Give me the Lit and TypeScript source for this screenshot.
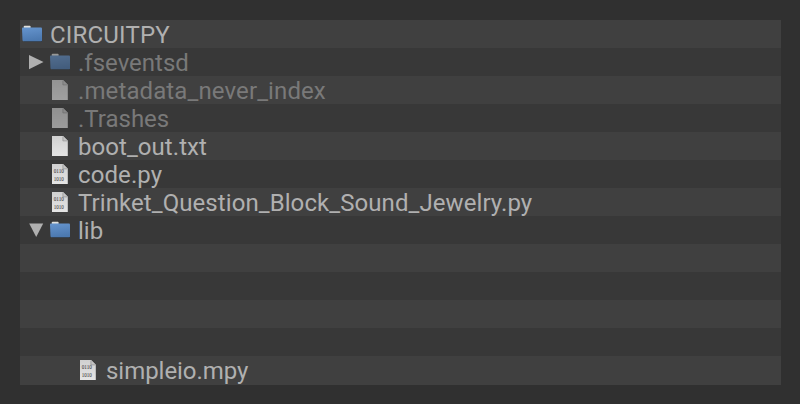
import { LitElement, html, css, svg, nothing } from "lit";
import { customElement } from "lit/decorators.js";
import { classMap } from "lit/directives/class-map.js";
import { styleMap } from "lit/directives/style-map.js";

type Kind = "folder" | "file" | "code";
interface Entry {
  name?: string;
  kind?: Kind;
  level?: number;
  open?: boolean;
  arrow?: boolean;
  dim?: boolean;
  tracking?: number;
}

const entries: Entry[] = [
  { name: "CIRCUITPY", kind: "folder", level: 0, tracking: 0.2 },
  { name: ".fseventsd", kind: "folder", level: 1, arrow: true, dim: true },
  { name: ".metadata_never_index", kind: "file", level: 1, dim: true, tracking: 0.11 },
  { name: ".Trashes", kind: "file", level: 1, dim: true },
  { name: "boot_out.txt", kind: "file", level: 1, tracking: 0.06 },
  { name: "code.py", kind: "code", level: 1, tracking: 0.1 },
  { name: "Trinket_Question_Block_Sound_Jewelry.py", kind: "code", level: 1, tracking: 0.08 },
  { name: "lib", kind: "folder", level: 1, arrow: true, open: true },
  {},
  {},
  {},
  {},
  { name: "simpleio.mpy", kind: "code", level: 2, tracking: -0.04 },
];

@customElement("app-root")
export class AppRoot extends LitElement {
  static styles = css`
    :host {
      display: block;
      box-sizing: border-box;
      height: 404px;
      padding: 20px 19px 19px 20px;
      background: #303030;
      font-family: Roboto, sans-serif;
      font-size: 24px;
      color: #b0b0b0;
    }
    .tree {
      display: flex;
      flex-direction: column;
      height: 365px;
    }
    .row {
      display: flex;
      align-items: flex-start;
      height: 28px;
      flex: none;
      background: #383838;
    }
    .row:nth-child(odd) {
      background: #404040;
    }
    .row:last-child {
      height: 29px;
    }
    .gap {
      width: 28px;
      height: 28px;
      flex: none;
    }
    .icon {
      width: 28px;
      height: 28px;
      flex: none;
      margin-right: 2px;
    }
    svg {
      display: block;
      width: 28px;
      height: 28px;
    }
    .name {
      line-height: 28px;
      height: 28px;
      white-space: pre;
      padding-top: 1px;
      box-sizing: border-box;
    }
    .dim .name {
      color: #797979;
    }
    .dim .icon {
      opacity: 0.58;
    }
    .bits {
      font: 5.4px "Liberation Serif", serif;
      fill: #222;
      opacity: 0.95;
    }
  `;

  private icon(kind: Kind) {
    if (kind === "folder") {
      return html`<svg viewBox="0 0 28 28">
        <defs>
          <linearGradient id="blue" x1="0" y1="0" x2="0.2" y2="1">
            <stop offset="0" stop-color="#6695ce" />
            <stop offset="1" stop-color="#4c79b0" />
          </linearGradient>
        </defs>
        <path d="M4 20h18v2H4z" fill="#202b38" opacity=".45" />
        <path d="M3.8 8V6.5q0-.7.8-.7h5.2q.8 0 .8.7V8z" fill="#e0e0dc" />
        <path
          d="M2 8.2q0-.8.8-.8H21q1 0 1 1v12q0 .8-.8.8H3.5q-.9 0-1-.9z"
          fill="url(#blue)"
        />
      </svg>`;
    }
    return html`<svg viewBox="0 0 28 28">
      <defs>
        <linearGradient id="paper" x1="0" y1="0" x2="0" y2="1">
          <stop offset="0" stop-color="#d0d0d0" />
          <stop offset="1" stop-color="#e5e5e5" />
        </linearGradient>
      </defs>
      <path d="M4 4h11l4.8 4.8V24H4z" fill="url(#paper)" />
      <path d="M15 4l4.8 4.8H15z" fill="#c4c4c4" />
      <path d="M14.9 4.5v4.4h4.4" fill="none" stroke="#858585" stroke-width=".6" />
      ${kind === "code"
        ? svg`<text class="bits" x="5.7" y="12.9" textLength="10.2" lengthAdjust="spacingAndGlyphs">0110</text>
          <text class="bits" x="5.7" y="20.9" textLength="10.2" lengthAdjust="spacingAndGlyphs">1010</text>`
        : nothing}
    </svg>`;
  }

  private arrow(open?: boolean) {
    return html`<svg viewBox="0 0 28 28">
      <path d=${open ? "M9.2 7.5h14L16.2 21z" : "M9 7v14.2L23.5 14z"} fill="#b0b0b0" />
    </svg>`;
  }

  private row(e: Entry) {
    if (!e.name || !e.kind) return html`<div class="row"></div>`;
    const level = e.level ?? 0;
    return html`<div class=${classMap({ row: true, dim: !!e.dim })}>
      ${Array.from(
        { length: level },
        (_, i) => html`<div class="gap">
          ${e.arrow && i === level - 1 ? this.arrow(e.open) : nothing}
        </div>`
      )}
      <div class="icon">${this.icon(e.kind)}</div>
      <div class="name" style=${styleMap({ letterSpacing: `${e.tracking ?? 0}px` })}>${e.name}</div>
    </div>`;
  }

  render() {
    return html`<div class="tree">${entries.map((e) => this.row(e))}</div>`;
  }
}
